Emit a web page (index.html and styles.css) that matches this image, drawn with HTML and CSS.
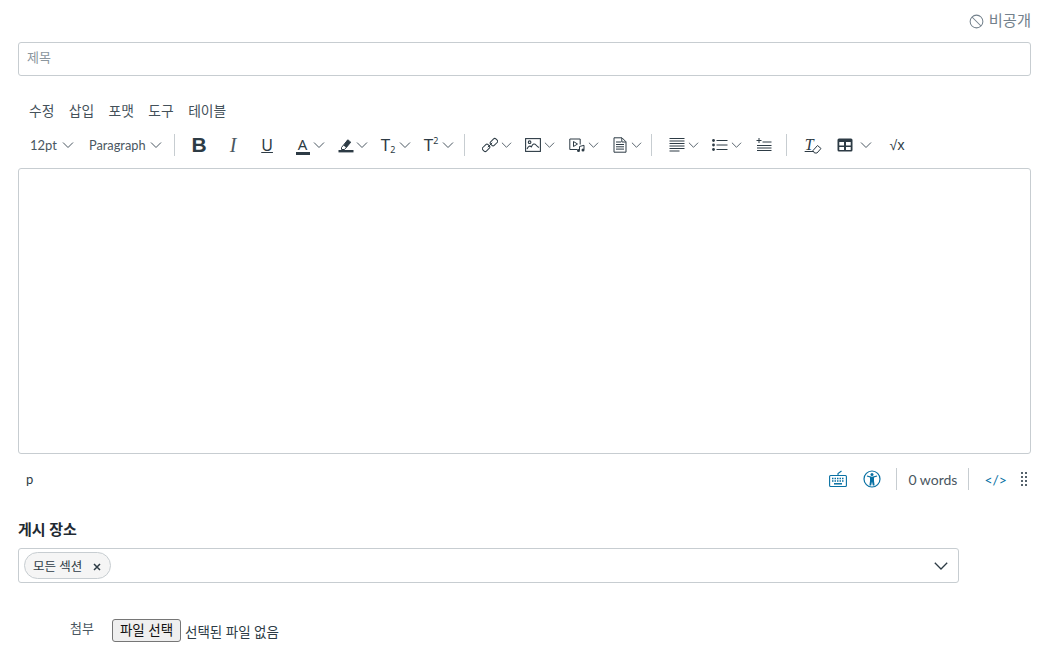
FILE: index.html
```html
<!DOCTYPE html>
<html lang="ko">
<head>
    <meta charset="UTF-8">
    <meta name="viewport" content="width=device-width, initial-scale=1.0">
    <title>토론 편집</title>
    <link rel="stylesheet" href="styles.css">
</head>
<body>
    <svg class="defs" width="0" height="0">
        <symbol id="chev" viewBox="0 0 12 12"><path d="M1 3.500l5 5 5-5" fill="none" stroke="currentColor" stroke-width="1"/></symbol>
    </svg>

    <div class="page">
        <div class="status-top">
            <svg class="ban" viewBox="0 0 16 16"><circle cx="8" cy="8" r="6.800" fill="none" stroke="currentColor" stroke-width="1.100"/><path d="M3.200 3.200l9.600 9.600" stroke="currentColor" stroke-width="1.100"/></svg>
            <span>비공개</span>
        </div>

        <div class="title-input">제목</div>

        <div class="menubar">
            <span>수정</span>
            <span>삽입</span>
            <span>포맷</span>
            <span>도구</span>
            <span>테이블</span>
        </div>

        <div class="toolbar">
            <div class="tb-group first">
                <div class="tb-select size">12pt <svg class="chev"><use href="#chev"/></svg></div>
                <div class="tb-select para">Paragraph <svg class="chev"><use href="#chev"/></svg></div>
            </div>
            <div class="tb-group format">
                <div class="tb-btn"><span class="gl gl-b">B</span></div>
                <div class="tb-btn"><span class="gl gl-i">I</span></div>
                <div class="tb-btn"><span class="gl gl-u">U</span></div>
                <div class="tb-split first-split">
                    <span class="gl gl-a">A</span>
                    <svg class="chev"><use href="#chev"/></svg>
                </div>
                <div class="tb-split mark">
                    <svg class="ico" viewBox="0 0 16 16"><path d="M3.500 10.500L9.800 2.800l3 2.400-6.300 7.300H3.500z" fill="none" stroke="currentColor"/><path d="M5.500 8.500l3 2.300 4-5.600-3-2.400z" fill="currentColor"/><rect x="0.500" y="13" width="15" height="2.400" fill="currentColor"/></svg>
                    <svg class="chev"><use href="#chev"/></svg>
                </div>
                <div class="tb-split">
                    <span class="gl gl-t">T<sub>2</sub></span>
                    <svg class="chev"><use href="#chev"/></svg>
                </div>
                <div class="tb-split">
                    <span class="gl gl-t">T<sup>2</sup></span>
                    <svg class="chev"><use href="#chev"/></svg>
                </div>
            </div>
            <div class="tb-group narrow">
                <div class="tb-split">
                    <svg class="ico" viewBox="0 0 16 16"><g fill="none" stroke="currentColor" stroke-width="1"><rect x="0.400" y="8.300" width="7.400" height="5" rx="1.600" transform="rotate(-45 4.100 10.800)"/><rect x="8.200" y="2.700" width="7.400" height="5" rx="1.600" transform="rotate(-45 11.900 5.200)"/><path d="M5.800 10.200l4.400-4.400"/></g></svg>
                    <svg class="chev"><use href="#chev"/></svg>
                </div>
                <div class="tb-split">
                    <svg class="ico" viewBox="0 0 16 16"><g fill="none" stroke="currentColor" stroke-width="1.100"><rect x="0.600" y="1.600" width="14.800" height="12.800"/><circle cx="4.600" cy="5.200" r="1.300"/><path d="M2 12c1.500-3 3-3.600 4.400-2.200 1.400-3 3-3.600 4.600-1.800 1 1.100 2 2 3 2.400"/></g></svg>
                    <svg class="chev"><use href="#chev"/></svg>
                </div>
                <div class="tb-split media">
                    <svg class="ico" viewBox="0 0 16 16"><g fill="none" stroke="currentColor" stroke-width="1"><path d="M8.500 12.500H.8V2h10.400v5.500"/><path d="M4.500 4.500v5l4-2.500z"/><path d="M10.500 13V9.500l4.500-1.200V12.500"/></g><circle cx="9.500" cy="13.500" r="1.500" fill="currentColor"/><circle cx="14" cy="13" r="1.500" fill="currentColor"/></svg>
                    <svg class="chev"><use href="#chev"/></svg>
                </div>
                <div class="tb-split">
                    <svg class="ico" viewBox="0 0 16 16"><g fill="none" stroke="currentColor" stroke-width="1"><path d="M2 .8h8l4 4v10.400H2z"/><path d="M4 5h5M4 7.500h8M4 9.800h8M4 12.100h8"/><path d="M9.800 1v4h4"/></g></svg>
                    <svg class="chev"><use href="#chev"/></svg>
                </div>
            </div>
            <div class="tb-group narrow">
                <div class="tb-split">
                    <svg class="ico" viewBox="0 0 16 16"><path d="M.5 1.500h15M.5 4h15M.5 6.500h15M.5 9h15M.5 11.500h15M.5 14h10" stroke="currentColor" fill="none"/></svg>
                    <svg class="chev"><use href="#chev"/></svg>
                </div>
                <div class="tb-split">
                    <svg class="ico" viewBox="0 0 16 16"><path d="M4.500 3.500h11M4.500 8h11M4.500 12.500h11" stroke="currentColor" fill="none"/><circle cx="1.500" cy="3.500" r="1.400" fill="currentColor"/><circle cx="1.500" cy="8" r="1.400" fill="currentColor"/><circle cx="1.500" cy="12.500" r="1.400" fill="currentColor"/></svg>
                    <svg class="chev"><use href="#chev"/></svg>
                </div>
                <div class="tb-btn last">
                    <svg class="ico" viewBox="0 0 16 16"><path d="M6.500 5h9M1 8.500h14.500M1 11h14.500M1 13.500h14.500" stroke="currentColor" fill="none"/><path d="M.5 3.500h5M3 1v5" stroke="currentColor" fill="none"/></svg>
                </div>
            </div>
            <div class="tb-group">
                <div class="tb-btn clear">
                    <span class="gl gl-clear">T</span>
                    <svg class="eraser" viewBox="0 0 10 10"><path d="M1 6.500L5.500 1.500 9 4.500 5 9H2.500z" fill="#fff" stroke="currentColor"/></svg>
                </div>
                <div class="tb-split table">
                    <svg class="ico" viewBox="0 0 16 16"><rect x=".5" y="1.500" width="15" height="13" rx="1.500" fill="currentColor"/><path d="M2.300 5h4.700v3.500H2.300zM9 5h4.700v3.500H9zM2.300 10h4.700v3H2.300zM9 10h4.700v3H9z" fill="#fff"/></svg>
                    <svg class="chev"><use href="#chev"/></svg>
                </div>
                <div class="tb-btn math"><span class="gl gl-math">√x</span></div>
            </div>
        </div>

        <div class="editor"></div>

        <div class="statusbar">
            <span class="path">p</span>
            <div class="status-right">
                <svg class="st-ico" viewBox="0 0 18 18"><g fill="none" stroke="currentColor" stroke-width="1.100"><rect x=".6" y="5.500" width="16.800" height="11" rx="1"/><path d="M9 5.500V3.500l3.500-2.500"/><path d="M3 8.500h12M3 11h12" stroke-width="1.500" stroke-dasharray="1.500 1"/><path d="M5 13.800h8" stroke-width="1.500"/></g></svg>
                <svg class="st-ico a11y" viewBox="0 0 18 18"><circle cx="9" cy="9" r="8" fill="none" stroke="currentColor" stroke-width="1.200"/><circle cx="9" cy="4.500" r="1.500" fill="currentColor"/><path d="M3.800 6.500L7 7.500v3.500l-.6 4.500h1.800L9 11.500l.8 4h1.800L11 11V7.500l3.200-1-.3-.9L9 6.700 4.100 5.600z" fill="currentColor"/></svg>
                <span class="st-sep"></span>
                <span class="words">0 words</span>
                <span class="st-sep"></span>
                <span class="code">&lt;/&gt;</span>
                <span class="grip"></span>
            </div>
        </div>

        <div class="field-label">게시 장소</div>
        <div class="multi-select">
            <div class="chip">
                <span>모든 섹션</span>
                <svg class="chip-x" viewBox="0 0 8 8"><path d="M1 1l6 6M7 1L1 7" stroke="currentColor" stroke-width="1.500"/></svg>
            </div>
            <svg class="select-arrow" viewBox="0 0 14 14"><path d="M.8 3.800L7 10l6.200-6.200" fill="none" stroke="currentColor" stroke-width="1.300"/></svg>
        </div>

        <div class="attach-row">
            <span class="attach-label">첨부</span>
            <span class="file-btn">파일 선택</span>
            <span class="file-name">선택된 파일 없음</span>
        </div>
    </div>
</body>
</html>
```

FILE: styles.css
```css
html, body {
    margin: 0;
    padding: 0;
    background-color: #fff;
    color: #2d3b45;
    font-family: Lato, "Noto Sans CJK KR", sans-serif;
    font-size: 13px;
}
.defs {
    position: absolute;
}
.page {
    width: 1013px;
    margin-left: 18px;
    padding-top: 9px;
}

/* top */
.status-top {
    display: flex;
    justify-content: flex-end;
    align-items: center;
    height: 20px;
    color: #73818c;
    font-size: 15.300px;
    gap: 5px;
}
.ban {
    width: 15px;
    height: 15px;
    margin-top: 4px;
}
.title-input {
    box-sizing: border-box;
    height: 34px;
    margin-top: 13px;
    padding: 5px 8px;
    border: 1px solid #c7cdd1;
    border-radius: 3px;
    color: #8b969e;
    font-size: 13px;
    line-height: 18px;
}

/* menu + toolbar */
.menubar {
    display: flex;
    gap: 14.400px;
    height: 24px;
    margin-top: 23px;
    padding-left: 11px;
    line-height: 24px;
    font-size: 13.800px;
    color: #44515a;
}
.toolbar {
    display: flex;
    align-items: center;
    height: 34px;
    margin-top: 5px;
    font-size: 13px;
}
.tb-group {
    display: flex;
    align-items: center;
    height: 22px;
    gap: 13px;
    padding: 0 9px 0 17px;
    border-left: 1px solid #c7cdd1;
}
.tb-group.first {
    border-left: none;
    padding: 0 12px 0 12px;
    gap: 15px;
}
.tb-group.format {
    padding-right: 10px;
}
.tb-select {
    display: flex;
    align-items: center;
    gap: 5px;
    color: #4a5761;
    white-space: nowrap;
}
.tb-select.para {
    gap: 4px;
    font-size: 12.800px;
}
.tb-split {
    display: flex;
    align-items: center;
    gap: 3px;
}
.tb-split.mark {
    gap: 2px;
}
.tb-split.first-split {
    margin-left: 2px;
}
.tb-split.media {
    margin-left: 1px;
}
.narrow .chev {
    width: 11px;
}
.tb-btn {
    width: 15px;
    display: flex;
    justify-content: center;
    margin-right: 6px;
}
.tb-btn.last {
    width: 16px;
    margin-left: 1px;
    margin-right: 5px;
}
.chev {
    width: 12px;
    height: 12px;
    color: #4a5761;
}
.ico {
    width: 16px;
    height: 16px;
    flex: none;
}
.gl {
    display: block;
    width: 16px;
    text-align: center;
    line-height: 20px;
}
.gl-b {
    font-family: "Liberation Sans", sans-serif;
    font-weight: bold;
    font-size: 21px;
}
.gl-i {
    font-family: "Liberation Serif", serif;
    font-style: italic;
    font-size: 20px;
    color: #4a5761;
}
.gl-u {
    font-family: "Noto Sans", sans-serif;
    font-size: 16px;
    text-decoration: underline;
}
.gl-a {
    width: 14px;
    font-family: "Noto Sans", sans-serif;
    font-size: 15px;
    border-bottom: 3px solid #2d3b45;
    line-height: 16px;
}
.gl-t {
    width: 15px;
    font-family: "Noto Sans", sans-serif;
    font-size: 17px;
    white-space: nowrap;
}
.gl-t sub, .gl-t sup {
    font-size: 9px;
    line-height: 0;
}
.gl-t sub {
    vertical-align: -2px;
}
.gl-t sup {
    vertical-align: 7px;
}
.tb-btn.clear {
    position: relative;
    width: 17px;
    margin-right: 3px;
}
.gl-clear {
    font-family: "Liberation Serif", serif;
    font-style: italic;
    font-size: 16px;
    text-decoration: underline;
    margin-left: -6px;
}
.eraser {
    position: absolute;
    right: -1px;
    bottom: 1px;
    width: 10px;
    height: 10px;
}
.tb-split.table {
    gap: 7px;
}
.tb-btn.math {
    margin-left: 5px;
}
.gl-math {
    font-family: "Noto Sans", sans-serif;
    font-size: 14px;
}

/* editor */
.editor {
    box-sizing: border-box;
    height: 286px;
    margin-top: 6px;
    border: 1px solid #c7cdd1;
    border-radius: 3px;
}
.statusbar {
    display: flex;
    justify-content: space-between;
    align-items: center;
    height: 32px;
    margin-top: 9px;
}
.path {
    padding-left: 8px;
    font-size: 13px;
}
.status-right {
    display: flex;
    align-items: center;
    gap: 11px;
    padding-right: 3px;
}
.st-ico {
    width: 18px;
    height: 18px;
    margin-right: 5px;
    color: #0770a3;
}
.a11y {
    margin-right: 4px;
}
.st-sep {
    width: 1px;
    height: 22px;
    background-color: #c7cdd1;
}
.words {
    font-size: 14px;
    color: #4a5761;
}
.code {
    margin-left: 4px;
    color: #0770a3;
    font-size: 14px;
}
.grip {
    width: 8px;
    height: 16px;
    margin-left: 2px;
    background-image: radial-gradient(#55626c 1.200px, transparent 1.400px);
    background-size: 4px 4px;
}

/* sections */
.field-label {
    margin-top: 24px;
    font-weight: bold;
    font-size: 15px;
    line-height: 20px;
    color: #1f2a32;
}
.multi-select {
    box-sizing: border-box;
    display: flex;
    align-items: center;
    justify-content: space-between;
    width: 941px;
    height: 35px;
    margin-top: 9px;
    padding: 0 10px 0 5px;
    border: 1px solid #c7cdd1;
    border-radius: 3px;
}
.chip {
    box-sizing: border-box;
    display: flex;
    align-items: center;
    height: 27px;
    width: 87px;
    padding: 0 8px;
    gap: 11px;
    border: 1px solid #c7cdd1;
    border-radius: 14px;
    background-color: #f5f5f5;
    font-size: 12.500px;
    white-space: nowrap;
}
.chip-x {
    width: 8px;
    height: 8px;
    flex: none;
    margin-top: 2px;
}
.select-arrow {
    width: 14px;
    height: 14px;
}
.attach-row {
    display: flex;
    align-items: center;
    margin-top: 36px;
    padding-left: 52px;
    font-size: 13px;
}
.attach-label {
    width: 42px;
    margin-top: -6px;
    color: #4a5761;
}
.file-btn {
    box-sizing: border-box;
    width: 69px;
    height: 23px;
    border: 1px solid #767676;
    border-radius: 3px;
    background-color: #efefef;
    color: #111;
    font-size: 13.500px;
    text-align: center;
    line-height: 20px;
}
.file-name {
    margin-left: 4px;
    font-size: 13.500px;
    color: #2d3b45;
}
```
